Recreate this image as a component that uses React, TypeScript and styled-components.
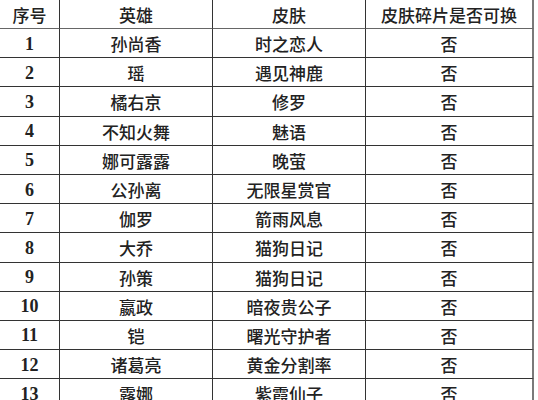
import { FC } from 'react'
import styled, { createGlobalStyle } from 'styled-components'

const GlobalStyle = createGlobalStyle`
  html, body {
    margin: 0;
    padding: 0;
    background: #ffffff;
    overflow: hidden;
  }
  * {
    box-sizing: border-box;
  }
`

type Row = [string, string, string, string]

const headers: Row = ['序号', '英雄', '皮肤', '皮肤碎片是否可换']

const rows: Row[] = [
  ['1', '孙尚香', '时之恋人', '否'],
  ['2', '瑶', '遇见神鹿', '否'],
  ['3', '橘右京', '修罗', '否'],
  ['4', '不知火舞', '魅语', '否'],
  ['5', '娜可露露', '晚萤', '否'],
  ['6', '公孙离', '无限星赏官', '否'],
  ['7', '伽罗', '箭雨风息', '否'],
  ['8', '大乔', '猫狗日记', '否'],
  ['9', '孙策', '猫狗日记', '否'],
  ['10', '嬴政', '暗夜贵公子', '否'],
  ['11', '铠', '曙光守护者', '否'],
  ['12', '诸葛亮', '黄金分割率', '否'],
  ['13', '露娜', '紫霞仙子', '否']
]

const App: FC = () => {
  return (
    <>
      <GlobalStyle />
      <Page>
        <SkinTable>
          {headers.map((h, i) => (
            <Cell key={`h_${i}`} $last={i === 3} $header>
              {h}
            </Cell>
          ))}
          {rows.map((row, r) =>
            row.map((value, i) => (
              <Cell key={`r_${r}_${i}`} $last={i === 3} $number={i === 0}>
                {value}
              </Cell>
            ))
          )}
        </SkinTable>
      </Page>
    </>
  )
}

const Page = styled.div`
  width: 538px;
  height: 400px;
  overflow: hidden;
  background: #ffffff;
`

const SkinTable = styled.div`
  display: grid;
  grid-template-columns: 60px 153px 153px 168px;
  grid-template-rows: 29px;
  grid-auto-rows: 29.2px;
  width: 534px;
`

const Cell = styled.div<{ $last?: boolean; $header?: boolean; $number?: boolean }>`
  display: flex;
  align-items: center;
  justify-content: center;
  border-bottom: 1px solid ${(p) => (p.$header ? '#666' : '#333')};
  border-right: ${(p) => (p.$last ? '2px solid #7a7a7a' : '1px solid #333')};
  font-family: ${(p) =>
    p.$number
      ? '"Liberation Serif", "Noto Sans CJK SC", serif'
      : '"Noto Sans CJK SC", "Liberation Serif", sans-serif'};
  font-size: ${(p) => (p.$number ? '18px' : '17px')};
  font-weight: ${(p) => (p.$number ? 700 : 500)};
  color: #222;
  line-height: 1;
  padding-top: 1px;
`

export default App
